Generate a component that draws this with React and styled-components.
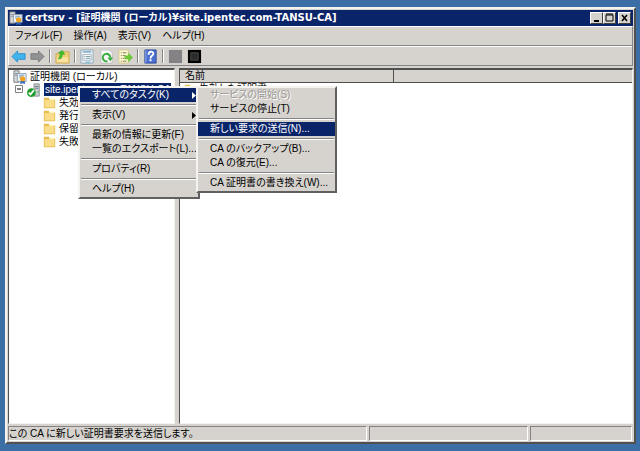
import React from 'react';
import styled, { createGlobalStyle, css } from 'styled-components';

const GlobalStyle = createGlobalStyle`
    * { box-sizing: border-box; }
    html, body, #root { height: 100%; }
    body {
        margin: 0;
        background: #3a6ea5;
        color: #000;
        font: 10px/14px "Liberation Sans", "Noto Sans CJK JP", sans-serif;
        font-feature-settings: "palt";
    }
    button { font: inherit; font-feature-settings: inherit; color: inherit; }
    svg { flex: none; }
`;

const Desktop = styled.div`
    height: 100%;
    padding: 7px 4px 7px 5px;
`;

const Window = styled.main`
    display: flex;
    flex-direction: column;
    height: 100%;
    padding: 1px;
    background: #d6d3ce;
    border: 2px solid;
    border-color: #f4f3f0 #505050 #505050 #f4f3f0;
`;

const TitleBar = styled.header`
    display: flex;
    align-items: center;
    gap: 2px;
    height: 16px;
    flex: none;
    padding: 0 2px 0 1px;
    background: #0a246a;
    color: #fff;
`;

const Title = styled.h1`
    flex: 1;
    margin: 0;
    font-family: "DejaVu Sans", "Noto Sans CJK JP", sans-serif;
    font-size: 10px;
    font-weight: bold;
    white-space: nowrap;
    overflow: hidden;
`;

const Caption = styled.button`
    width: 13px;
    height: 12px;
    padding: 0;
    display: flex;
    background: #d6d3ce;
    border: 1px solid;
    border-color: #fff #404040 #404040 #fff;
    margin-left: ${({ $apart }) => ($apart ? '0' : '-2px')};
`;

const Bars = styled.div`
    flex: none;
    border: 1px solid;
    border-color: #fff #848284 #848284 #fff;
`;

const MenuBar = styled.nav`
    display: flex;
    align-items: center;
    gap: 11px;
    height: 19px;
    padding: 0 6px;
    border-bottom: 1px solid #848284;
`;

const BarButton = styled.button`
    padding: 0;
    border: 0;
    background: none;
    white-space: nowrap;
`;

const Toolbar = styled.div`
    display: flex;
    align-items: center;
    gap: 4px;
    height: 19px;
    padding: 0 2px;
    border-top: 1px solid #fff;
`;

const ToolButton = styled(BarButton)`
    display: flex;
    width: 15px;
    height: 15px;
`;

const Divider = styled.span`
    width: 2px;
    height: 14px;
    border-left: 1px solid #848284;
    border-right: 1px solid #fff;
`;

const Panes = styled.div`
    position: relative;
    display: grid;
    grid-template-columns: 167px 1fr;
    gap: 4px;
    flex: 1;
    min-height: 0;
    padding-top: 2px;
`;

const Pane = styled.section`
    background: #fff;
    border: 1px solid;
    border-color: #505050 #f4f3f0 #f4f3f0 #505050;
    border-top-width: 2px;
    overflow: hidden;
`;

const Tree = styled.ul`
    list-style: none;
    margin: 0;
    padding: 0;
`;

const TreeRow = styled.li`
    display: flex;
    align-items: center;
    gap: 3px;
    height: 13px;
    padding-left: ${({ $indent }) => $indent}px;
    white-space: nowrap;
`;

const Selected = styled.span`
    padding-left: 1px;
    background: #0a246a;
    color: #fff;
    line-height: 13px;
`;

const Table = styled.table`
    width: 100%;
    border-collapse: collapse;
    table-layout: fixed;
    th {
        height: 12px;
        padding: 0 5px;
        background: #d6d3ce;
        border-bottom: 1px solid #505050;
        font-weight: normal;
        line-height: 12px;
        text-align: left;
    }
    th:first-child { width: 213px; border-right: 1px solid #505050; }
    td { padding: 0 4px; line-height: 12px; white-space: nowrap; }
`;

const NameCell = styled.div`
    display: flex;
    align-items: center;
    gap: 2px;
    height: 12px;
`;

const menuBox = css`
    position: absolute;
    padding-bottom: 1px;
    border: 2px solid;
    border-color: #f4f3f0 #606060 #606060 #f4f3f0;
    background: #d6d3ce;
`;

const ContextMenu = styled.div`
    ${menuBox}
    left: 70px;
    top: 20px;
    width: 122px;
`;

const SubMenu = styled.div`
    ${menuBox}
    left: 116px;
    top: -2px;
    width: 141px;
`;

const MenuItem = styled.button`
    display: flex;
    align-items: center;
    justify-content: space-between;
    width: 100%;
    height: 14px;
    padding: 0 2px 0 12px;
    border: 0;
    text-align: left;
    white-space: nowrap;
    background: ${({ $active }) => ($active ? '#0a246a' : 'none')};
    color: ${({ $active }) => ($active ? '#fff' : '#000')};
    &:disabled { color: #9a9894; text-shadow: 1px 1px #fff; }
`;

const Rule = styled.hr`
    height: 2px;
    margin: 2px 1px;
    border: 0;
    border-top: 1px solid #848284;
    border-bottom: 1px solid #fff;
`;

const StatusBar = styled.footer`
    display: grid;
    grid-template-columns: 359px 1fr 102px;
    gap: 2px;
    flex: none;
    height: 17px;
    padding: 2px 1px 0 0;
`;

const StatusCell = styled.span`
    border: 1px solid;
    border-color: #848284 #fff #fff #848284;
    line-height: 14px;
    white-space: nowrap;
    overflow: hidden;
`;

const Svg = ({ size = 14, children }) => (
    <svg width={size} height={size} viewBox="0 0 16 16" aria-hidden="true">{children}</svg>
);

const FolderIcon = () => (
    <Svg size={13}>
        <path d="M1 2h6l1 2h7v11H1z" fill="#e6bd52" />
        <path d="M2 5h12v9H2z" fill="#f9dd88" />
        <path d="M8 3h6v2H8z" fill="#fff6c8" />
    </Svg>
);

const AuthorityIcon = () => (
    <Svg>
        <path d="M1 1h6v13H1z" fill="#d8dadc" stroke="#73777d" />
        <path d="M2 4h4M2 6h4" stroke="#6c8a9c" />
        <path d="M5 4h10v9H5z" fill="#f1f4f8" stroke="#8b98a8" />
        <path d="M7 6h6M7 8h3" stroke="#5c8fc5" />
        <path d="m9 12-1 4 3-1 3 1-1-4z" fill="#2c68c4" />
        <circle cx="11" cy="10" r="3" fill="#f0a21c" />
    </Svg>
);

const ServerIcon = () => (
    <Svg>
        <path d="M8 1h6v14H8z" fill="#c8ccd0" stroke="#85898d" />
        <path d="M9 4h4M9 6h4" stroke="#6c7c88" />
        <path d="M12 9h1v2h-1z" fill="#3cc43c" />
        <circle cx="5" cy="11" r="5" fill="#1f9e2c" />
        <path d="m2 11 2 2 4-5" fill="none" stroke="#fff" strokeWidth="2" />
    </Svg>
);

const Chevron = () => (
    <svg width="4" height="7" viewBox="0 0 4 7" aria-hidden="true"><path d="M0 0v7l4-3.5z" fill="currentColor" /></svg>
);

const Arrow = ({ fill, stroke, flip }) => (
    <Svg size={15}>
        <path d={flip ? 'M15 8 9 2v3H1v6h8v3z' : 'M1 8l6-6v3h8v6H7v3z'} fill={fill} stroke={stroke} />
    </Svg>
);

const tools = [
    ['戻る', <Arrow fill="#41b4ee" stroke="#2e8fce" />],
    ['進む', <Arrow fill="#909294" stroke="#77797b" flip />],
    null,
    ['上へ', <Svg size={15}><path d="M1 5h5l1-2h8v12H1z" fill="#f0cf78" stroke="#d0aa4e" /><path d="M2 9h12v5H2z" fill="#f9e2a0" /><path d="M3 11c4 0 5-2 5-5h3L8 1 3 4l2 1c0 3-1 4-2 6z" fill="#45b92c" /></Svg>],
    null,
    ['プロパティ', <Svg size={15}><path d="M1 1h13v14H1z" fill="#eef4f8" stroke="#8fa6b8" /><path d="M3 3h9" stroke="#8fb4cf" strokeWidth="2" /><path d="M3 6h9v6H3z" fill="#fff" stroke="#a4b2bd" /><path d="M4 8h1m1 0h5M4 10h1m1 0h5" stroke="#7895aa" /><path d="M6 14h5" stroke="#48b5d8" /></Svg>],
    ['最新の情報に更新', <Svg size={15}><path d="M2 1h9l3 3v11H2z" fill="#f8f8f8" stroke="#c0c0c0" /><path d="M9 13a4 4 0 1 1 3-4" fill="none" stroke="#35a93a" strokeWidth="2" /><path d="M9 9h6l-3 4z" fill="#35a93a" /></Svg>],
    ['エクスポート', <Svg size={15}><path d="M1 1h10v14H1z" fill="#fff8d0" stroke="#d2c68c" /><path d="M3 4h1m1 0h4M3 7h1m1 0h3M3 10h1m1 0h2M3 13h1m1 0h4" stroke="#77755f" /><path d="M7 7h4V4l5 5-5 5v-3H7z" fill="#6cc83a" /></Svg>],
    null,
    ['ヘルプ', <Svg size={15}><path d="M2 1h12v14H2z" fill="#4a70d0" stroke="#2b479c" /><path d="M3 1v14" stroke="#96aeea" /><path d="M6 6c0-4 5-4 5-1 0 2-3 2-3 5M8 11v2" fill="none" stroke="#fff" strokeWidth="2" /></Svg>],
    null,
    ['停止', <Svg size={15}><path d="M1 1h14v14H1z" fill="#848284" /></Svg>],
    ['記録', <Svg size={15}><path d="M1 1h14v14H1z" fill="#000" /><path d="M4 4h8v8H4z" fill="#2c2c2c" stroke="#484848" /></Svg>],
];

const App = () => {
    const folders = ['失効した証明書', '発行した証明書', '保留中の要求', '失敗した要求'];

    return (
        <Desktop>
            <GlobalStyle />
            <Window>
                <TitleBar>
                    <AuthorityIcon />
                    <Title>certsrv - [証明機関 (ローカル)¥site.ipentec.com-TANSU-CA]</Title>
                    <Caption aria-label="最小化"><svg width="11" height="10"><path d="M3 7h5v2H3z" /></svg></Caption>
                    <Caption aria-label="最大化"><svg width="11" height="10"><path d="M2 2h7v6H2zM2 1h7" fill="none" stroke="#000" /></svg></Caption>
                    <Caption aria-label="閉じる" $apart><svg width="11" height="10"><path d="m3 2 5 6m0-6L3 8" stroke="#000" strokeWidth="1.5" /></svg></Caption>
                </TitleBar>
                <Bars>
                    <MenuBar>
                        <BarButton>ファイル(F)</BarButton>
                        <BarButton>操作(A)</BarButton>
                        <BarButton>表示(V)</BarButton>
                        <BarButton>ヘルプ(H)</BarButton>
                    </MenuBar>
                    <Toolbar>
                        {tools.map((tool, i) => (tool
                            ? <ToolButton key={i} aria-label={tool[0]}>{tool[1]}</ToolButton>
                            : <Divider key={i} />))}
                    </Toolbar>
                </Bars>
                <Panes>
                    <Pane>
                        <Tree>
                            <TreeRow $indent={4}><AuthorityIcon />証明機関 (ローカル)</TreeRow>
                            <TreeRow $indent={6}>
                                <svg width="9" height="9"><path d="M.5.5h7v7h-7z" fill="#fff" stroke="#848284" /><path d="M2 4h4" stroke="#000" /></svg>
                                <ServerIcon />
                                <Selected>site.ipentec.com-TANSU-CA</Selected>
                            </TreeRow>
                            {folders.map((name) => (
                                <TreeRow key={name} $indent={34}><FolderIcon />{name}</TreeRow>
                            ))}
                        </Tree>
                    </Pane>
                    <Pane>
                        <Table>
                            <thead><tr><th>名前</th><th aria-label="空" /></tr></thead>
                            <tbody><tr><td><NameCell><FolderIcon />失効した証明書</NameCell></td><td /></tr></tbody>
                        </Table>
                    </Pane>
                    <ContextMenu>
                        <MenuItem $active>すべてのタスク(K)<Chevron /></MenuItem>
                        <Rule />
                        <MenuItem>表示(V)<Chevron /></MenuItem>
                        <Rule />
                        <MenuItem>最新の情報に更新(F)</MenuItem>
                        <MenuItem>一覧のエクスポート(L)...</MenuItem>
                        <Rule />
                        <MenuItem>プロパティ(R)</MenuItem>
                        <Rule />
                        <MenuItem>ヘルプ(H)</MenuItem>
                        <SubMenu>
                            <MenuItem disabled>サービスの開始(S)</MenuItem>
                            <MenuItem>サービスの停止(T)</MenuItem>
                            <Rule />
                            <MenuItem $active>新しい要求の送信(N)...</MenuItem>
                            <Rule />
                            <MenuItem>CA のバックアップ(B)...</MenuItem>
                            <MenuItem>CA の復元(E)...</MenuItem>
                            <Rule />
                            <MenuItem>CA 証明書の書き換え(W)...</MenuItem>
                        </SubMenu>
                    </ContextMenu>
                </Panes>
                <StatusBar>
                    <StatusCell>この CA に新しい証明書要求を送信します。</StatusCell>
                    <StatusCell />
                    <StatusCell />
                </StatusBar>
            </Window>
        </Desktop>
    );
};

export default App;
